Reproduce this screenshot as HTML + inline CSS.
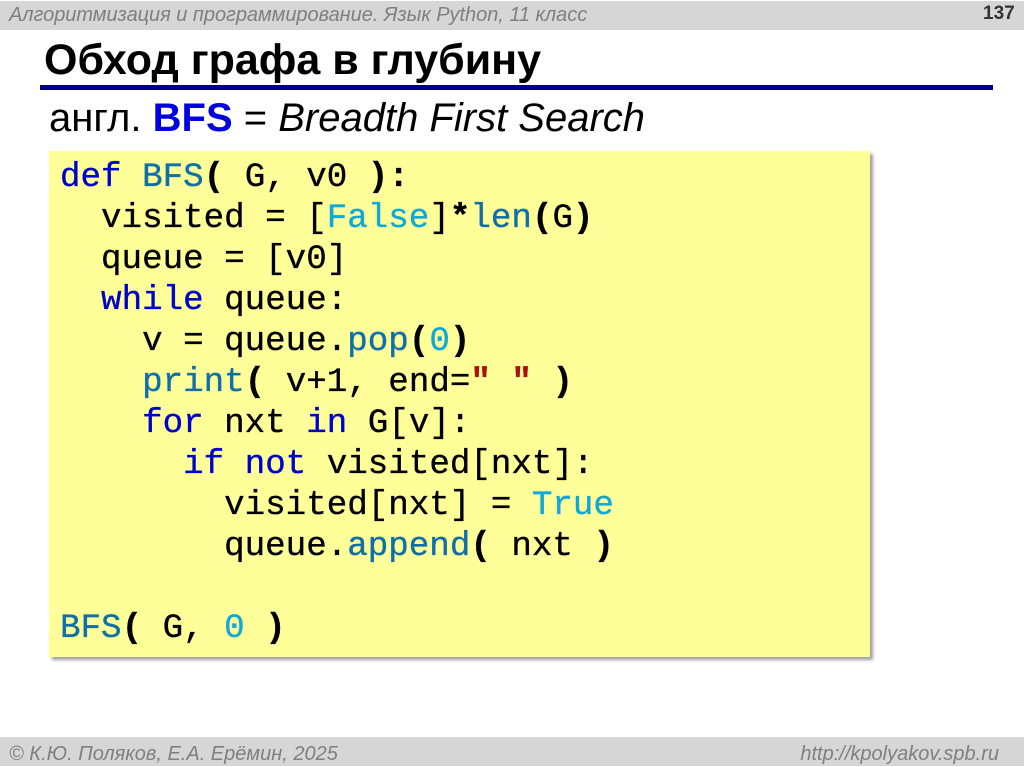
<!DOCTYPE html>
<html><head><meta charset="utf-8"><style>
html,body{margin:0;padding:0;width:1024px;height:767px;overflow:hidden;background:#fff}
body{position:relative;font-family:"Liberation Sans",sans-serif}
.a{position:absolute;white-space:pre;line-height:1}
.bar{position:absolute;left:0;width:1024px;background:#d6d6d6}
.g{color:#7f7f7f;font-style:italic;font-size:20px}
.code{position:absolute;left:49px;top:151px;width:821px;height:506px;background:#ffff99;box-shadow:3px 3px 3px #a0a0a0}
.l{position:absolute;left:60px;white-space:pre;font-family:"Liberation Mono",monospace;font-size:34.2px;line-height:41px;height:41px;color:#000;-webkit-text-stroke:.35px currentColor}
.k{color:#0000cc}.f{color:#0f6fa8}.c{color:#0fa8d8}.s{color:#a81010;font-weight:bold}
b{font-weight:bold}
</style></head><body>
<div class="bar" style="top:1px;height:29px"></div>
<div class="bar" style="top:737px;height:29px"></div>
<div class="a g" style="left:9px;top:5px;letter-spacing:-.04px">Алгоритмизация и программирование. Язык Python, 11 класс</div>
<div class="a" style="left:983px;top:4px;font-size:19px;font-weight:bold;color:#333">137</div>
<div class="a" style="left:44px;top:39px;font-size:43px;font-weight:bold;color:#000">Обход графа в глубину</div>
<div style="position:absolute;left:40px;top:85px;width:953px;height:5px;background:#000080"></div>
<div class="a" style="left:49px;top:98px;font-size:40px;color:#000">англ. <b style="color:#0000e0">BFS</b> = <i>Breadth First Search</i></div>
<div class="code"></div>
<div class="l" style="top:158px"><span class="k">def</span> <span class="f">BFS</span><b>(</b> G, v0 <b>):</b></div>
<div class="l" style="top:199px">  visited = [<span class="c">False</span>]<b>*</b><span class="f">len</span><b>(</b>G<b>)</b></div>
<div class="l" style="top:240px">  queue = [v0]</div>
<div class="l" style="top:281px">  <span class="k">while</span> queue:</div>
<div class="l" style="top:322px">    v = queue.<span class="f">pop</span><b>(</b><span class="c">0</span><b>)</b></div>
<div class="l" style="top:363px">    <span class="f">print</span><b>(</b> v+1, end=<span class="s">" "</span> <b>)</b></div>
<div class="l" style="top:404px">    <span class="k">for</span> nxt <span class="k">in</span> G[v]:</div>
<div class="l" style="top:445px">      <span class="k">if</span> <span class="k">not</span> visited[nxt]:</div>
<div class="l" style="top:486px">        visited[nxt] = <span class="c">True</span></div>
<div class="l" style="top:527px">        queue.<span class="f">append</span><b>(</b> nxt <b>)</b></div>
<div class="l" style="top:609px"><span class="f">BFS</span><b>(</b> G, <span class="c">0</span> <b>)</b></div>
<div class="a g" style="left:9px;top:744px">© К.Ю. Поляков, Е.А. Ерёмин, 2025</div>
<div class="a g" style="right:25px;top:744px">http://kpolyakov.spb.ru</div>
</body></html>
